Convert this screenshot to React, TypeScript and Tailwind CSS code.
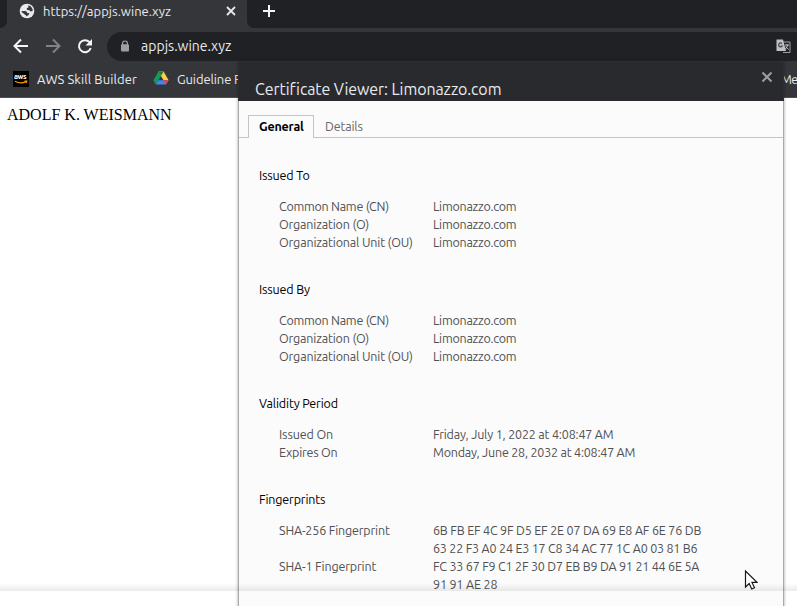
import { ReactNode } from "react";

type Row = { label: string; value: string; gap: string; track: string };

const org = (): Row[] => [
  { label: "Common Name (CN)", value: "Limonazzo.com", gap: "tracking-[-0.26px]", track: "tracking-[-0.25px]" },
  { label: "Organization (O)", value: "Limonazzo.com", gap: "tracking-[-0.17px]", track: "tracking-[-0.25px]" },
  { label: "Organizational Unit (OU)", value: "Limonazzo.com", gap: "tracking-[-0.16px]", track: "tracking-[-0.25px]" },
];

function Section({ title, track, children }: { title: string; track: string; children: ReactNode }) {
  return (
    <section className="mb-[29px]">
      <h2 className={`h-[18px] whitespace-nowrap text-black ${track}`}><span>{title}</span></h2>
      <div className="mt-[13px] pl-5">{children}</div>
    </section>
  );
}

function Line({ label, value, gap, track }: Row) {
  return (
    <div className="flex h-[18px] whitespace-nowrap text-[#505153]">
      <div className="w-[154px] shrink-0"><span className={gap}>{label}</span></div>
      <div><span className={track}>{value}</span></div>
    </div>
  );
}

function Globe() {
  return (
    <svg className="size-4" viewBox="0 0 16 16">
      <circle cx="8" cy="8" r="7.3" fill="#e8eaed" />
      <path d="M2.2 8.2 L6 8 Q8.2 8.2 8.2 10 L10.5 10.2 Q10 12.8 7 13.6 L7 12 Q5.2 12 5.2 10.8 Q3.4 10.5 2.2 8.2Z M9.2 2.3 Q12.5 3 13.6 6.2 L13.6 8 L11.5 8.4 L10.4 7.2 L8.3 7.1 Q7.3 6.2 8 5 L9.5 4.5Z" fill="#35363a" />
    </svg>
  );
}

function Drive() {
  return (
    <svg className="h-[14px] w-4" viewBox="0 0 16 14">
      <path d="M5.4 0.5 L8 5 L2.7 13.2 L0.4 9.4Z" fill="#0f9d58" />
      <path d="M5.4 0.5H10.6L15.6 9.2H10.5Z" fill="#ffcf48" />
      <path d="M5.3 9.2H15.6L13 13.5H2.7Z" fill="#4285f4" />
      <path d="M10.5 9.2H15.6L13 13.5Z" fill="#ea4335" />
      <path d="M5.4 .5H10.6L8 5Z" fill="#188038" />
    </svg>
  );
}

function Aws() {
  return (
    <div className="relative size-4 bg-black">
      <span className="absolute left-px top-0 text-[7.5px] font-bold leading-[11px] tracking-[-0.4px] text-white">aws</span>
      <svg className="absolute inset-0 size-4" viewBox="0 0 16 16">
        <path d="M2 10.2Q7.5 13.3 13 10.7M11.5 10H13.8L13.2 12" fill="none" stroke="#ff9900" strokeWidth="1.1" />
      </svg>
    </div>
  );
}

function Dialog() {
  return (
    <div className="absolute left-[238px] top-[62px] h-[560px] w-[546px] border-x border-[#aaaaaa] bg-[#fbfbfb] text-[12.5px] leading-[18px] shadow-[0_0_3px_rgba(0,0,0,0.35)]">
      <header className="-mx-px flex h-[39px] justify-between border-x border-[#2d2e31] bg-[#292a2d] pl-[16px] pr-[10px]">
        <h1 className="mt-[15px] whitespace-nowrap text-[16px] leading-6 tracking-[-0.08px] text-[#e8eaed]"><span>Certificate Viewer: Limonazzo.com</span></h1>
        <svg className="mt-[9px] size-3" viewBox="0 0 12 12"><path d="M1.5 1.5L10.5 10.5M10.5 1.5L1.5 10.5" stroke="#9aa0a6" strokeWidth="2" /></svg>
      </header>
      <nav className="mt-[14px] flex h-[23px] border-b border-[#c4c4c4] pl-[9px]">
        <div className="h-[23px] w-[66px] border border-b-0 border-[#c4c4c4] bg-[#fbfbfb] pl-[10px] leading-[20px] font-bold tracking-[-0.2px] text-black"><span>General</span></div>
        <div className="pl-[11px] leading-[22px] tracking-[-0.15px] text-[#666]"><span>Details</span></div>
      </nav>
      <main className="pl-5 pt-[28px]">
        <Section title="Issued To" track="tracking-[-0.15px]">{org().map((r) => <Line key={r.label} {...r} />)}</Section>
        <Section title="Issued By" track="tracking-[-0.15px]">{org().map((r) => <Line key={r.label} {...r} />)}</Section>
        <Section title="Validity Period" track="tracking-[-0.15px]">
          <Line label="Issued On" value="Friday, July 1, 2022 at 4:08:47 AM" gap="tracking-[-0.12px]" track="tracking-[-0.18px]" />
          <Line label="Expires On" value="Monday, June 28, 2032 at 4:08:47 AM" gap="tracking-[-0.2px]" track="tracking-[-0.21px]" />
        </Section>
        <Section title="Fingerprints" track="tracking-[-0.15px]">
          <Line label="SHA-256 Fingerprint" value="6B FB EF 4C 9F D5 EF 2E 07 DA 69 E8 AF 6E 76 DB" gap="tracking-[-0.16px]" track="tracking-[-0.18px]" />
          <Line label="" value="63 22 F3 A0 24 E3 17 C8 34 AC 77 1C A0 03 81 B6" gap="tracking-[-0.1px]" track="tracking-[-0.2px]" />
          <Line label="SHA-1 Fingerprint" value="FC 33 67 F9 C1 2F 30 D7 EB B9 DA 91 21 44 6E 5A" gap="tracking-[-0.14px]" track="tracking-[-0.2px]" />
          <Line label="" value="91 91 AE 28" gap="tracking-[-0.1px]" track="tracking-[-0.16px]" />
        </Section>
      </main>
    </div>
  );
}

export default function App() {
  return (
    <div className="relative h-[606px] w-[797px] overflow-hidden bg-white font-['Ubuntu','Noto_Sans',sans-serif]">
      <div className="flex h-[28px] bg-[#35363a]">
        <div className="w-[7px] rounded-br-[7px] bg-[#202124]" />
        <div className="flex w-[240px] items-start pl-3">
          <div className="mt-[3px]"><Globe /></div>
          <div className="ml-2 mt-px w-[183px] whitespace-nowrap text-[13px] leading-5 tracking-[0.03px] text-[#e8eaed]"><span>https://appjs.wine.xyz</span></div>
          <svg className="mt-[6px] size-[10px]" viewBox="0 0 10 10"><path d="M1 1L9 9M9 1L1 9" stroke="#e8eaed" strokeWidth="1.8" /></svg>
        </div>
        <div className="flex-1 rounded-bl-[7px] bg-[#202124] pl-4">
          <svg className="mt-[5px] size-3" viewBox="0 0 12 12"><path d="M6 0V12M0 6H12" stroke="#f1f3f4" strokeWidth="2" /></svg>
        </div>
      </div>
      <div className="flex h-9 items-center bg-[#35363a]">
        <svg className="ml-[13px] size-4" viewBox="0 0 16 16"><path d="M15 8H2M8 1.5L1.5 8L8 14.5" fill="none" stroke="#f1f3f4" strokeWidth="2" /></svg>
        <svg className="ml-4 size-4" viewBox="0 0 16 16"><path d="M1 8H14M8 1.5L14.5 8L8 14.5" fill="none" stroke="#818286" strokeWidth="2" /></svg>
        <svg className="ml-4 size-4" viewBox="0 0 16 16"><path d="M13.7 10A6 6 0 1 1 12.5 4.2" fill="none" stroke="#f1f3f4" strokeWidth="2" /><path d="M15 1V7.5H8.5Z" fill="#f1f3f4" /></svg>
        <div className="ml-[14px] flex h-[29px] flex-1 items-center rounded-l-full bg-[#202124] pl-[14px]">
          <svg className="h-3 w-[8px]" viewBox="0 0 8 12"><path d="M1.6 5V3.2Q1.6 1 4 1T6.4 3.2V5" fill="none" stroke="#9aa0a6" strokeWidth="1.2" /><rect y="4.2" width="8" height="7.3" rx="1" fill="#9aa0a6" /></svg>
          <div className="ml-3 flex-1 whitespace-nowrap text-[14px] leading-5 tracking-[0.02px] text-[#e8eaed]"><span>appjs.wine.xyz</span></div>
          <svg className="mr-[6px] size-[15px]" viewBox="0 0 15 15">
            <path d="M6 3H14V13.5H7" fill="none" stroke="#9aa0a6" />
            <path d="M0.5 .5H7L10 12H.5Z" fill="#bdc1c6" />
            <path d="M6 4.5A2 2 0 1 0 6.3 7H4.5" fill="none" stroke="#44464a" strokeWidth="1.2" />
            <path d="M9 6H13M11 5V6M12 6L9.2 10.5M9.7 7.3L12.5 10.5" fill="none" stroke="#bdc1c6" />
          </svg>
        </div>
      </div>
      <div className="flex h-[34px] items-start border-b border-[#4d4e51] bg-[#35363a] pl-[13px] pt-[5px] text-[13px] leading-5 text-[#e8eaed]">
        <div className="mt-[2px] shrink-0"><Aws /></div>
        <div className="ml-2 w-[117px] shrink-0 whitespace-nowrap"><span className="tracking-[0.09px]">AWS Skill Builder</span></div>
        <div className="-ml-px mt-[2px] shrink-0"><Drive /></div>
        <div className="ml-2 w-[604px] shrink-0 whitespace-nowrap"><span className="tracking-[-0.1px]">Guideline F</span></div>
        <div className="shrink-0 whitespace-nowrap text-[12.5px] tracking-[-0.5px]"><span>Me</span></div>
      </div>
      <div className="pl-[7px] pt-[7px] font-['Liberation_Serif',serif] text-[16px] leading-5 text-black"><span>ADOLF K. WEISMANN</span></div>
      <Dialog />
      <div className="absolute left-0 top-[583px] h-2 w-full bg-gradient-to-b from-transparent to-black/8" />
      <svg className="absolute left-[744px] top-[570px] h-[21px] w-[14px]" viewBox="0 0 14 21"><path d="M1.5 1V17L5.2 13.5L7.7 19L10.5 17.7L8 12.4H13Z" fill="white" stroke="#171717" strokeWidth="1.2" /></svg>
    </div>
  );
}
